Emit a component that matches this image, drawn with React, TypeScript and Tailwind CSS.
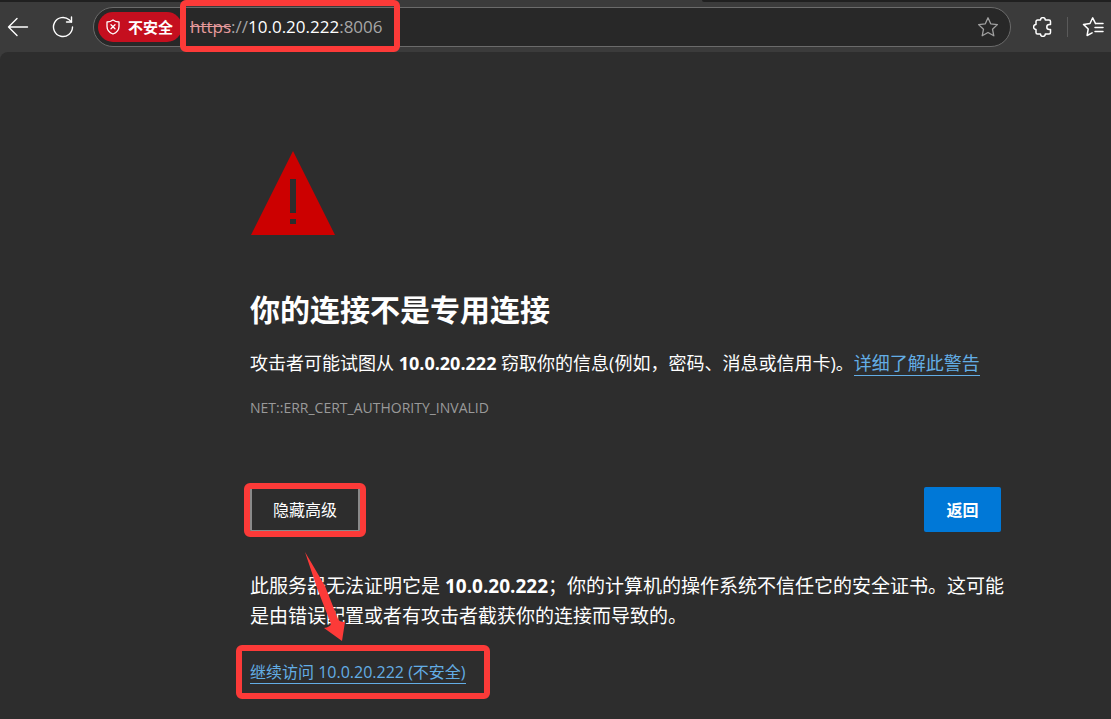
import type { ReactNode } from 'react';

const HOST = '10.0.20.222';

const BackIcon = () => (
  <svg width="22" height="22" viewBox="0 0 22 22" fill="none" stroke="currentColor" strokeWidth="1.4" strokeLinecap="round" strokeLinejoin="round">
    <path d="M20.500 11H1.500M10 2.500 1.500 11l8.500 8.500" />
  </svg>
);

const ReloadIcon = () => (
  <svg width="22" height="22" viewBox="0 0 22 22" fill="none" stroke="currentColor" strokeWidth="1.4" strokeLinecap="round" strokeLinejoin="round">
    <path d="M20.500 11a9.500 9.500 0 1 1-3.300-7.200L19.500 6" />
    <path d="M19.500 1v5h-5" />
  </svg>
);

const ShieldIcon = () => (
  <svg width="14" height="16" viewBox="0 0 14 16" fill="none" stroke="currentColor" strokeWidth="1.3" strokeLinecap="round" strokeLinejoin="round">
    <path d="M7 1c1.700 1.300 3.600 2 6 2v4.500c0 3.600-2.200 6-6 7.500-3.800-1.500-6-3.900-6-7.500V3c2.400 0 4.300-.7 6-2Z" />
    <path d="m5 5.700 4 4M9 5.700l-4 4" />
  </svg>
);

const StarIcon = () => (
  <svg width="22" height="22" viewBox="0 0 22 22" fill="none" stroke="currentColor" strokeWidth="1.3" strokeLinejoin="round">
    <path d="M11 1.800l2.700 6 6.700.8-4.900 4.600 1.300 6.600L11 16.500l-5.800 3.300 1.300-6.600L1.600 8.600l6.700-.8Z" />
  </svg>
);

const ExtensionsIcon = () => (
  <svg width="20" height="20" viewBox="0 0 20 20" fill="none" stroke="currentColor" strokeWidth="1.5" strokeLinejoin="round">
    <path d="M4.500 3h3a2.400 2.400 0 0 1 4.800 0H16a1.500 1.500 0 0 1 1.500 1.500v3h-1.200a2.500 2.500 0 0 0 0 5h1.200v3A1.500 1.500 0 0 1 16 17h-3.700a2.400 2.400 0 0 1-4.800 0h-3A1.500 1.500 0 0 1 3 15.500v-3.100a2.400 2.400 0 0 1 0-4.800V4.500A1.500 1.500 0 0 1 4.500 3Z" />
  </svg>
);

const FavoritesIcon = () => (
  <svg width="22" height="22" viewBox="0 0 22 22" fill="none" stroke="currentColor" strokeWidth="1.5" strokeLinecap="round" strokeLinejoin="round">
    <path d="M13.500 7.500 10.700 1.800 8 7.500l-6.500.9 4.700 4.600-1.100 6.500 5-2.600" />
    <path d="M13.500 7.500H21M13 11.500h8M13 15.500h8" />
  </svg>
);

const Highlight = ({ className }: { className: string }) => (
  <span className={`pointer-events-none absolute rounded-md border-6 border-[#fc3a38] ${className}`} />
);

const TabStrip = () => (
  <div className="flex h-0.5">
    <div className="w-[184px] rounded-br-xs bg-[#202020]" />
    <div className="w-[518px]" />
    <div className="flex-1 rounded-bl-xs bg-[#202020]" />
  </div>
);

const Toolbar = () => (
  <header className="flex h-[50px] items-center pl-[7px] text-white">
    <button type="button" aria-label="后退">
      <BackIcon />
    </button>
    <button type="button" aria-label="刷新" className="ml-[23px]">
      <ReloadIcon />
    </button>
    <div className="ml-[19px] flex h-10 flex-1 items-center rounded-full border border-[#6b6b6b] bg-[#282828] pr-[11px] pl-1">
      <button type="button" className="flex h-[30px] w-[84px] shrink-0 items-center gap-2 rounded-full bg-[#c50f1f] pl-2 text-[15px] font-bold whitespace-nowrap">
        <ShieldIcon />
        不安全
      </button>
      <div className="relative ml-2 text-[17px] leading-6 whitespace-nowrap text-[#a6a6a6]">
        <span className="text-[#e59a9c] line-through">https</span>
        ://<span className="text-white">{HOST}</span>:8006
        <Highlight className="-top-[15px] -right-[17px] -bottom-[13px] -left-2.5" />
      </div>
      <button type="button" aria-label="收藏此页" className="ml-auto text-[#a0a0a0]">
        <StarIcon />
      </button>
    </div>
    <button type="button" aria-label="扩展" className="ml-[22px]">
      <ExtensionsIcon />
    </button>
    <div className="mx-[14px] h-5 w-px bg-[#5a5a5a]" />
    <button type="button" aria-label="收藏夹" className="mr-[7px]">
      <FavoritesIcon />
    </button>
  </header>
);

const TextLink = ({ children }: { children: ReactNode }) => (
  <a href="#" className="border-b border-[#63ade5] text-[#63ade5]">
    {children}
  </a>
);

const Arrow = () => (
  <svg className="pointer-events-none absolute top-[64px] left-[54px]" width="44" height="90" viewBox="0 0 44 90" fill="#fc3a38">
    <path d="M1 1 21 35 34 68q1 3 7 3L38 90 20 77q6-1 7-4L13 37Z" />
  </svg>
);

export default function App() {
  return (
    <div className="min-h-screen bg-[#3b3b3b] font-['Open_Sans','Noto_Sans_CJK_SC',sans-serif]">
      <TabStrip />
      <Toolbar />
      <main className="min-h-[calc(100vh-52px)] rounded-tl-lg bg-[#2d2d2d] pt-[99px] pr-[110px] pl-[250px] text-white">
        <div className="max-w-[751px]">
          <svg width="86" height="86" viewBox="0 0 86 86">
            <path d="M43 0 85 84H1Z" fill="#c00" />
            <path d="M40 28h6v34h-6zM40 68h6v5h-6z" fill="#2d2d2d" />
          </svg>
          <h1 className="mt-[53px] text-[30px] leading-10 font-bold">你的连接不是专用连接</h1>
          <p className="mt-[19px] -mr-2 text-[18px] leading-7">
            攻击者可能试图从 <strong>{HOST}</strong> 窃取你的信息(例如，密码、消息或信用卡)。<TextLink>详细了解此警告</TextLink>
          </p>
          <p className="mt-[19px] text-sm leading-6 text-[#9a9a9a]">NET::ERR_CERT_AUTHORITY_INVALID</p>
          <div className="mt-[67px] flex items-center justify-between">
            <div className="relative">
              <button type="button" className="h-[45px] rounded-xs border-2 border-[#8a8a8a] px-[21px] text-base leading-6">
                隐藏高级
              </button>
              <Highlight className="-top-1 -right-1.5 -bottom-[5px] -left-1.5" />
              <Arrow />
            </div>
            <button type="button" className="h-[45px] min-w-[77px] rounded-xs bg-[#0078d7] px-5 text-base leading-6 font-bold">
              返回
            </button>
          </div>
          <p className="mt-[39px] -mr-2 text-[19px] leading-[30px]">
            此服务器无法证明它是 <strong>{HOST}</strong>；你的计算机的操作系统不信任它的安全证书。这可能是由错误配置或者有攻击者截获你的连接而导致的。
          </p>
          <p className="relative mt-[29px] w-fit text-base leading-6">
            <TextLink>继续访问 {HOST} (不安全)</TextLink>
            <Highlight className="-top-[15px] -right-6 -bottom-[15px] -left-[14px]" />
          </p>
        </div>
      </main>
    </div>
  );
}
